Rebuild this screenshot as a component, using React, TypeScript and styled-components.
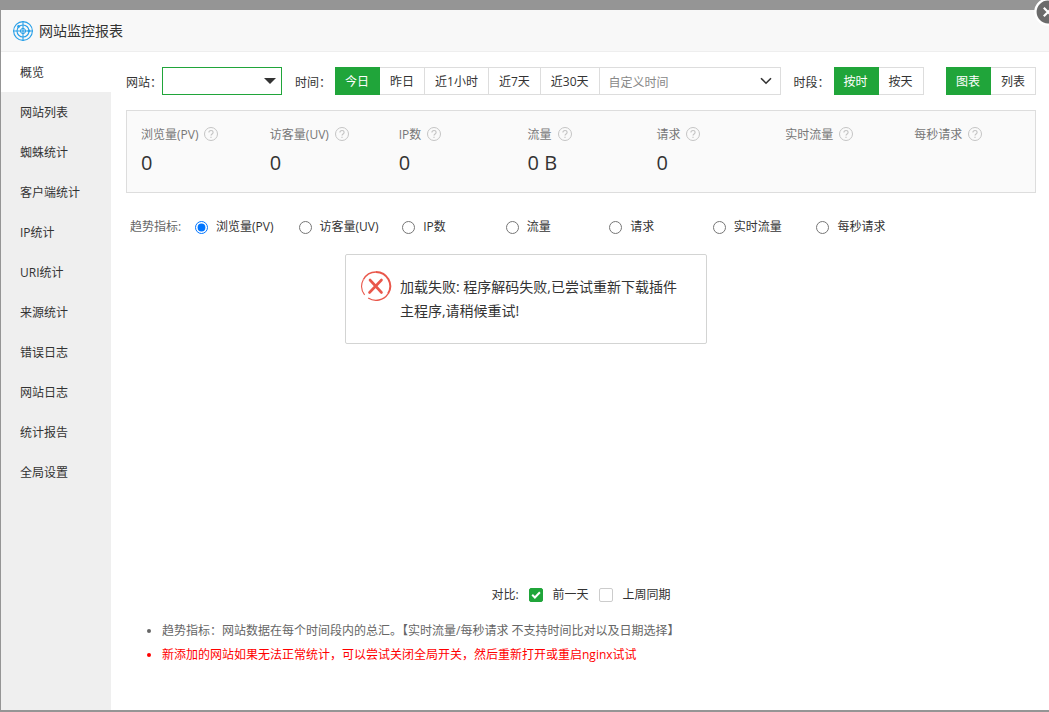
import React, { useState } from "react";
import styled, { createGlobalStyle, css } from "styled-components";

const GREEN = "#20a53a";

const GlobalStyle = createGlobalStyle`
  *, *::before, *::after { box-sizing: border-box; }
  html, body { margin: 0; }
  body, button, input, select {
    font-family: "Open Sans", "Noto Sans CJK SC", sans-serif;
    font-size: 12px;
  }
  body { color: #333; line-height: 20px; background: #959595; }
`;

const Backdrop = styled.div`
  min-height: 100vh;
  display: flex;
  padding: 10px 0 2px 1px;
  overflow: hidden;
  background: #959595;
`;

const Modal = styled.section`
  position: relative;
  flex: 1;
  min-width: 0;
  margin-right: -2px;
  display: flex;
  flex-direction: column;
  background: #fff;
`;

const Header = styled.header`
  display: flex;
  align-items: center;
  gap: 5px;
  height: 42px;
  padding: 0 11px;
  background: #f8f8f8;
  border-bottom: 1px solid #eee;
`;

const Title = styled.h1`
  margin: 0;
  font-size: 14px;
  line-height: 20px;
  font-weight: 400;
`;

const CloseButton = styled.button`
  position: absolute;
  top: -13px;
  right: -12px;
  width: 30px;
  height: 30px;
  padding: 0;
  border: 0;
  background: none;
  cursor: pointer;
`;

const Body = styled.div`
  flex: 1;
  display: flex;
`;

const Sidebar = styled.nav`
  flex: 0 0 110px;
  display: flex;
  flex-direction: column;
  background: #efefef;
`;

const NavItem = styled.a<{ $active?: boolean }>`
  height: 40px;
  padding-left: 19px;
  line-height: 42px;
  color: #333;
  text-decoration: none;
  background: ${(p) => (p.$active ? "#fff" : "transparent")};
`;

const Content = styled.main`
  flex: 1;
  min-width: 0;
  padding: 15px;
  display: flex;
  flex-direction: column;
`;

const Toolbar = styled.div`
  display: flex;
  align-items: center;
  height: 28px;
`;

const Field = styled.div`
  display: flex;
  align-items: center;
  margin-right: 13px;
`;

const FieldLabel = styled.label`
  width: 36px;
  padding-top: 4px;
  white-space: nowrap;
`;

const GroupLabel = styled.span`
  width: 40px;
  padding-top: 4px;
  white-space: nowrap;
`;

const SelectBox = styled.div<{ $kind: "site" | "range" }>`
  display: grid;
  align-items: center;
  height: 28px;
  background: #fff;
  ${(p) =>
    p.$kind === "site"
      ? css`
          width: 120px;
          border: 1px solid ${GREEN};
        `
      : css`
          width: 181px;
          border: 1px solid #ddd;
          border-left: 0;
        `}
  select, svg { grid-area: 1 / 1; }
  svg {
    justify-self: end;
    margin-right: ${(p) => (p.$kind === "site" ? "5px" : "6px")};
    pointer-events: none;
  }
`;

const Select = styled.select`
  appearance: none;
  width: 100%;
  height: 26px;
  padding: 2px 9px 0;
  border: 0;
  outline: 0;
  background: transparent;
  color: #888;
`;

const ButtonGroup = styled.div`
  display: flex;
`;

const SegButton = styled.button<{ $active?: boolean }>`
  height: 28px;
  padding: 2px 10px 0;
  border: 1px solid ${(p) => (p.$active ? GREEN : "#ddd")};
  border-left: 0;
  background: ${(p) => (p.$active ? GREEN : "#fff")};
  color: ${(p) => (p.$active ? "#fff" : "#333")};
  line-height: 20px;
  white-space: nowrap;
  cursor: pointer;
`;

const ViewGroup = styled(ButtonGroup)`
  margin-left: auto;
`;

const Summary = styled.dl`
  display: grid;
  grid-template-columns: repeat(7, minmax(0, 1fr));
  height: 83px;
  margin: 15px 0 0;
  padding: 14px 6px 0 0;
  background: #fafafa;
  border: 1px solid #ddd;
`;

const Stat = styled.div`
  padding-left: 14px;
`;

const StatName = styled.dt`
  display: flex;
  align-items: center;
  gap: 6px;
  height: 20px;
  color: #777;
  white-space: nowrap;
  svg { margin-bottom: 2px; }
`;

const StatValue = styled.dd`
  margin: 3px 0 0;
  font-size: 20px;
  line-height: 30px;
`;

const Metrics = styled.fieldset`
  display: flex;
  align-items: center;
  height: 20px;
  margin: 24px 0 0;
  padding: 0 0 0 4px;
  border: 0;
`;

const MetricsLabel = styled.span`
  flex: 0 0 65px;
  color: #666;
`;

const MetricOptions = styled.div`
  flex: 0 1 725px;
  display: grid;
  grid-template-columns: repeat(7, minmax(0, 1fr));
`;

const Option = styled.label<{ $gap?: number }>`
  display: flex;
  align-items: center;
  gap: ${(p) => p.$gap ?? 8}px;
  white-space: nowrap;
  cursor: pointer;
`;

const Radio = styled.input`
  width: 13px;
  height: 13px;
  margin: 0;
`;

const Chart = styled.div`
  flex: 1;
  min-height: 340px;
`;

const Compare = styled.div`
  display: flex;
  align-items: center;
  justify-content: center;
  gap: 10px;
`;

const CheckBox = styled.input`
  appearance: none;
  width: 14px;
  height: 14px;
  margin: 0;
  border: 1px solid #ccc;
  border-radius: 2px;
  background: #fff;
  &:checked {
    border-color: ${GREEN};
    background: ${GREEN};
  }
`;

const CheckWrap = styled.span`
  display: grid;
  place-items: center;
  > * { grid-area: 1 / 1; }
  svg { pointer-events: none; z-index: 1; }
`;

const Notes = styled.ul`
  margin: 14px 0 28px;
  padding-left: 36px;
  line-height: 24px;
  color: #666;
`;

const Note = styled.li<{ $warn?: boolean }>`
  color: ${(p) => (p.$warn ? "#f00" : "inherit")};
`;

const Message = styled.div`
  position: absolute;
  top: 244px;
  left: calc(50% - 181px);
  width: 362px;
  min-height: 90px;
  display: flex;
  gap: 8px;
  padding: 15px 24px 15px 14px;
  background: #fff;
  border: 1px solid #d3d4d3;
  border-radius: 2px;
  svg { flex: none; }
`;

const MessageText = styled.p`
  margin: 5px 0 0;
  font-size: 14px;
  line-height: 24px;
`;

const RadarIcon = () => (
  <svg width="22" height="22" viewBox="0 0 22 22" fill="none" stroke="#279fe8" aria-hidden="true">
    <circle cx="11" cy="11" r="9.4" strokeWidth="1.1" />
    <circle cx="11" cy="11" r="6" strokeWidth="1.1" />
    <circle cx="11" cy="11" r="2.6" strokeWidth="1" />
    <path d="M11 1v20M1 11h20" strokeWidth="1.1" />
    <circle cx="6.6" cy="6.4" r="1.4" fill="#279fe8" stroke="none" />
    <circle cx="17" cy="11" r="1.4" fill="#279fe8" stroke="none" />
  </svg>
);

const CloseIcon = () => (
  <svg width="30" height="30" viewBox="0 0 30 30" fill="none" aria-hidden="true">
    <circle cx="15" cy="15" r="12.6" fill="#6b6b6b" stroke="#fff" strokeWidth="2.4" />
    <path d="M10.8 10.8l8.4 8.4M19.2 10.8l-8.4 8.4" stroke="#fff" strokeWidth="2.2" />
  </svg>
);

const HelpIcon = () => (
  <svg width="14" height="14" viewBox="0 0 14 14" fill="none" stroke="#c4c4c4" aria-hidden="true">
    <circle cx="7" cy="7" r="6.5" />
    <path d="M4.9 5.6c0-1.3.9-2.1 2.1-2.1s2.1.8 2.1 1.9c0 1.5-2.1 1.6-2.1 3.2" strokeWidth="1.1" />
    <path d="M7 9.8v1.2" strokeWidth="1.1" />
  </svg>
);

const ErrorIcon = () => (
  <svg width="32" height="32" viewBox="0 0 32 32" fill="none" stroke="#e9574b" aria-hidden="true">
    <path d="M4.6 24.8A14.3 14.3 0 0 1 3.4 9.5" strokeWidth="1.1" />
    <path d="M3.4 9.5A14.3 14.3 0 0 1 16 1.9" strokeWidth="1.5" />
    <path d="M16 1.9A14.3 14.3 0 0 1 28 23.8" strokeWidth="2" />
    <path d="M28 23.8A14.3 14.3 0 0 1 8.2 28" strokeWidth="1.3" />
    <path d="M10 10l11.5 12.5M21.5 10l-12 12.5" strokeWidth="2.6" strokeLinecap="round" />
  </svg>
);

const CheckMark = () => (
  <svg width="14" height="14" viewBox="0 0 14 14" fill="none" stroke="#fff" strokeWidth="2" aria-hidden="true">
    <path d="M3.2 6.8l2.7 2.7 5-5.2" />
  </svg>
);

const NAV = ["概览", "网站列表", "蜘蛛统计", "客户端统计", "IP统计", "URI统计", "来源统计", "错误日志", "网站日志", "统计报告", "全局设置"];
const RANGES = ["今日", "昨日", "近1小时", "近7天", "近30天"];
const STATS: [string, string][] = [
  ["浏览量(PV)", "0"],
  ["访客量(UV)", "0"],
  ["IP数", "0"],
  ["流量", "0 B"],
  ["请求", "0"],
  ["实时流量", ""],
  ["每秒请求", ""],
];

function Segments({ items, value, onChange }: { items: string[]; value: string; onChange: (v: string) => void }) {
  return (
    <>
      {items.map((t) => (
        <SegButton key={t} type="button" $active={t === value} aria-pressed={t === value} onClick={() => onChange(t)}>
          {t}
        </SegButton>
      ))}
    </>
  );
}

export default function App() {
  const [nav, setNav] = useState("概览");
  const [range, setRange] = useState("今日");
  const [unit, setUnit] = useState("按时");
  const [view, setView] = useState("图表");
  const [metric, setMetric] = useState("浏览量(PV)");
  const [prevDay, setPrevDay] = useState(true);
  const [lastWeek, setLastWeek] = useState(false);

  return (
    <>
      <GlobalStyle />
      <Backdrop>
        <Modal role="dialog" aria-labelledby="title">
          <Header>
            <RadarIcon />
            <Title id="title">网站监控报表</Title>
          </Header>
          <Body>
            <Sidebar>
              {NAV.map((t) => (
                <NavItem key={t} href="#" $active={t === nav} onClick={() => setNav(t)}>
                  {t}
                </NavItem>
              ))}
            </Sidebar>
            <Content>
              <Toolbar>
                <Field>
                  <FieldLabel htmlFor="site">网站：</FieldLabel>
                  <SelectBox $kind="site">
                    <Select id="site" />
                    <svg width="12" height="6" viewBox="0 0 12 6" aria-hidden="true">
                      <path d="M0 0h12L6 6z" fill="#333" />
                    </svg>
                  </SelectBox>
                </Field>
                <Field>
                  <GroupLabel>时间：</GroupLabel>
                  <ButtonGroup>
                    <Segments items={RANGES} value={range} onChange={setRange} />
                    <SelectBox $kind="range">
                      <Select aria-label="自定义时间">
                        <option>自定义时间</option>
                      </Select>
                      <svg width="16" height="16" viewBox="0 0 16 16" fill="none" stroke="#333" strokeWidth="1.6" aria-hidden="true">
                        <path d="M3 5.2l5 5 5-5" />
                      </svg>
                    </SelectBox>
                  </ButtonGroup>
                </Field>
                <Field>
                  <GroupLabel>时段：</GroupLabel>
                  <ButtonGroup>
                    <Segments items={["按时", "按天"]} value={unit} onChange={setUnit} />
                  </ButtonGroup>
                </Field>
                <ViewGroup>
                  <Segments items={["图表", "列表"]} value={view} onChange={setView} />
                </ViewGroup>
              </Toolbar>
              <Summary>
                {STATS.map(([name, value]) => (
                  <Stat key={name}>
                    <StatName>
                      {name}
                      <HelpIcon />
                    </StatName>
                    <StatValue>{value}</StatValue>
                  </Stat>
                ))}
              </Summary>
              <Metrics>
                <MetricsLabel>趋势指标:</MetricsLabel>
                <MetricOptions>
                  {STATS.map(([name]) => (
                    <Option key={name}>
                      <Radio type="radio" name="metric" checked={metric === name} onChange={() => setMetric(name)} />
                      {name}
                    </Option>
                  ))}
                </MetricOptions>
              </Metrics>
              <Chart />
              <Compare>
                <span>对比:</span>
                <Option $gap={10}>
                  <CheckWrap>
                    <CheckBox type="checkbox" checked={prevDay} onChange={() => setPrevDay(!prevDay)} />
                    {prevDay && <CheckMark />}
                  </CheckWrap>
                  前一天
                </Option>
                <Option $gap={10}>
                  <CheckWrap>
                    <CheckBox type="checkbox" checked={lastWeek} onChange={() => setLastWeek(!lastWeek)} />
                    {lastWeek && <CheckMark />}
                  </CheckWrap>
                  上周同期
                </Option>
              </Compare>
              <Notes>
                <Note>趋势指标：网站数据在每个时间段内的总汇。【实时流量/每秒请求 不支持时间比对以及日期选择】</Note>
                <Note $warn>新添加的网站如果无法正常统计，可以尝试关闭全局开关，然后重新打开或重启nginx试试</Note>
              </Notes>
            </Content>
          </Body>
          <Message role="alert">
            <ErrorIcon />
            <MessageText>加载失败: 程序解码失败,已尝试重新下载插件主程序,请稍候重试!</MessageText>
          </Message>
          <CloseButton type="button" aria-label="关闭">
            <CloseIcon />
          </CloseButton>
        </Modal>
      </Backdrop>
    </>
  );
}
